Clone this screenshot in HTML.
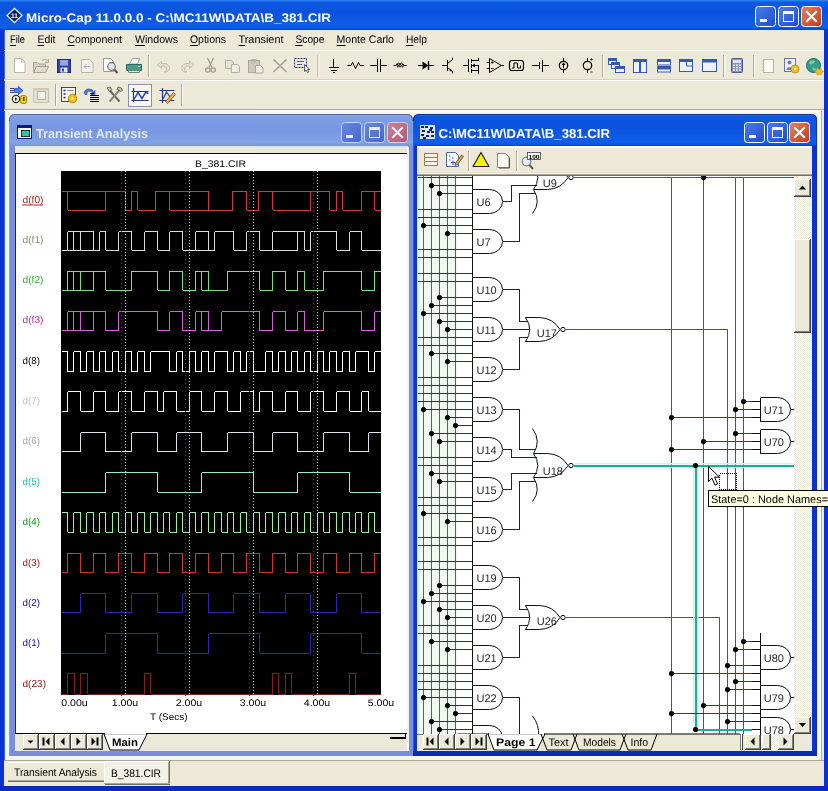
<!DOCTYPE html>
<html><head><meta charset="utf-8"><title>Micro-Cap 11.0.0.0 - C:\MC11W\DATA\B_381.CIR</title>
<style>
html,body{margin:0;padding:0;background:#ece9d8;overflow:hidden}
body{width:828px;height:791px;position:relative;font-family:'Liberation Sans', sans-serif}
svg{position:absolute;left:0;top:0;display:block;will-change:transform;opacity:0.9999}
svg text{font-family:'Liberation Sans', sans-serif;white-space:pre;text-rendering:geometricPrecision}
</style></head><body>
<svg width="828" height="791" viewBox="0 0 828 791">
<defs>
<linearGradient id="gA" x1="0" y1="0" x2="0" y2="1">
<stop offset="0" stop-color="#2f86f5"/><stop offset="0.08" stop-color="#0c58e4"/><stop offset="0.4" stop-color="#0a52dc"/>
<stop offset="0.88" stop-color="#0f5ee8"/><stop offset="0.95" stop-color="#0a55e0"/><stop offset="1" stop-color="#0a3fc8"/>
</linearGradient>
<linearGradient id="gI" x1="0" y1="0" x2="0" y2="1">
<stop offset="0" stop-color="#8fa9ec"/><stop offset="0.1" stop-color="#7f9ee6"/><stop offset="0.5" stop-color="#7896e2"/>
<stop offset="0.9" stop-color="#80a2e6"/><stop offset="1" stop-color="#7b93de"/>
</linearGradient>
<linearGradient id="gBtn" x1="0" y1="0" x2="1" y2="1">
<stop offset="0" stop-color="#4a7cf0"/><stop offset="1" stop-color="#1f4cc8"/>
</linearGradient>
<linearGradient id="gCls" x1="0" y1="0" x2="1" y2="1">
<stop offset="0" stop-color="#e8825c"/><stop offset="1" stop-color="#c2391b"/>
</linearGradient>
<linearGradient id="gBtnI" x1="0" y1="0" x2="1" y2="1">
<stop offset="0" stop-color="#6a88e2"/><stop offset="1" stop-color="#4666ca"/>
</linearGradient>
<linearGradient id="gClsI" x1="0" y1="0" x2="1" y2="1">
<stop offset="0" stop-color="#cc8494"/><stop offset="1" stop-color="#b05a70"/>
</linearGradient>
<clipPath id="cpS"><rect x="417" y="176" width="377" height="558"/></clipPath>
<clipPath id="cpP"><rect x="61" y="171" width="320" height="524"/></clipPath>
</defs>
<rect x="0" y="0" width="828" height="791" fill="#ece9d8" />
<rect x="5" y="111" width="816" height="650" fill="#f6f6f1" />
<rect x="821" y="111" width="1" height="650" fill="#b4b0a0" />
<rect x="0" y="0" width="828" height="30" fill="url(#gA)" />
<rect x="0" y="30" width="4" height="761" fill="#0b33d4" />
<rect x="824" y="30" width="4" height="761" fill="#0b33d4" />
<rect x="0" y="786" width="828" height="5" fill="#0a2cbc" />
<rect x="4" y="30" width="1" height="756" fill="#3a66e8" />
<g><path d="M7,15.5 L14.5,8.5 L22,15.5 L14.5,22.5 Z" fill="#0a1a6a" stroke="#d8f0ff" stroke-width="1.3"/></g>
<text x="14.5" y="18" font-size="6.5" fill="#ffffff" font-weight="bold" text-anchor="middle" >11</text>
<text x="26" y="21.5" font-size="12.5" fill="#fff" font-weight="bold" textLength="305" lengthAdjust="spacingAndGlyphs" text-anchor="start" >Micro-Cap 11.0.0.0 - C:\MC11W\DATA\B_381.CIR</text>
<rect x="755.5" y="6.5" width="20" height="20" rx="3" ry="3" fill="url(#gBtn)" stroke="#fff" stroke-width="1"/>
<rect x="760" y="19" width="7" height="3" fill="#fff" />
<rect x="778.5" y="6.5" width="20" height="20" rx="3" ry="3" fill="url(#gBtn)" stroke="#fff" stroke-width="1"/>
<rect x="783.5" y="11.5" width="10" height="10" fill="none" stroke="#fff" stroke-width="1"/>
<rect x="783" y="11" width="11" height="3" fill="#fff" />
<rect x="801.5" y="6.5" width="20" height="20" rx="3" ry="3" fill="url(#gCls)" stroke="#fff" stroke-width="1"/>
<path d="M807,12 L816,21 M816,12 L807,21" stroke="#fff" stroke-width="2.2" stroke-linecap="square"/>
<text x="10" y="43" font-size="11" fill="#000" textLength="15" lengthAdjust="spacingAndGlyphs" text-anchor="start" >File</text>
<rect x="10" y="45" width="6" height="1" fill="#000" />
<text x="37.5" y="43" font-size="11" fill="#000" textLength="18" lengthAdjust="spacingAndGlyphs" text-anchor="start" >Edit</text>
<rect x="37.5" y="45" width="6.5" height="1" fill="#000" />
<text x="67.5" y="43" font-size="11" fill="#000" textLength="54.5" lengthAdjust="spacingAndGlyphs" text-anchor="start" >Component</text>
<rect x="67.5" y="45" width="7" height="1" fill="#000" />
<text x="135" y="43" font-size="11" fill="#000" textLength="43" lengthAdjust="spacingAndGlyphs" text-anchor="start" >Windows</text>
<rect x="135" y="45" width="10" height="1" fill="#000" />
<text x="190" y="43" font-size="11" fill="#000" textLength="36" lengthAdjust="spacingAndGlyphs" text-anchor="start" >Options</text>
<rect x="190" y="45" width="8" height="1" fill="#000" />
<text x="238.5" y="43" font-size="11" fill="#000" textLength="45" lengthAdjust="spacingAndGlyphs" text-anchor="start" >Transient</text>
<rect x="238.5" y="45" width="6.5" height="1" fill="#000" />
<text x="295.5" y="43" font-size="11" fill="#000" textLength="29" lengthAdjust="spacingAndGlyphs" text-anchor="start" >Scope</text>
<rect x="295.5" y="45" width="7" height="1" fill="#000" />
<text x="336.5" y="43" font-size="11" fill="#000" textLength="57.5" lengthAdjust="spacingAndGlyphs" text-anchor="start" >Monte Carlo</text>
<rect x="336.5" y="45" width="9" height="1" fill="#000" />
<text x="406" y="43" font-size="11" fill="#000" textLength="21" lengthAdjust="spacingAndGlyphs" text-anchor="start" >Help</text>
<rect x="406" y="45" width="7.5" height="1" fill="#000" />
<rect x="4" y="50" width="820" height="1" fill="#fff" />
<rect x="4" y="79" width="820" height="1" fill="#d8d2bd" />
<rect x="4" y="80" width="820" height="1" fill="#fff" />
<rect x="4" y="109" width="820" height="1" fill="#aca899" />
<rect x="4" y="110" width="820" height="1" fill="#fff" />
<rect x="148" y="55" width="1" height="22" fill="#aca899" />
<rect x="149" y="55" width="1" height="22" fill="#fff" />
<rect x="317.5" y="55" width="1" height="22" fill="#aca899" />
<rect x="318.5" y="55" width="1" height="22" fill="#fff" />
<rect x="602" y="55" width="1" height="22" fill="#aca899" />
<rect x="603" y="55" width="1" height="22" fill="#fff" />
<rect x="723" y="55" width="1" height="22" fill="#aca899" />
<rect x="724" y="55" width="1" height="22" fill="#fff" />
<rect x="753" y="55" width="1" height="22" fill="#aca899" />
<rect x="754" y="55" width="1" height="22" fill="#fff" />
<rect x="55" y="84" width="1" height="22" fill="#aca899" />
<rect x="56" y="84" width="1" height="22" fill="#fff" />
<rect x="181" y="84" width="1" height="22" fill="#aca899" />
<rect x="182" y="84" width="1" height="22" fill="#fff" />
<path d="M9,756 V120 Q9,114 15,114 H407 Q413,114 413,120 V756 Z" fill="#7a8fdc"/>
<path d="M9,146 V120 Q9,114 15,114 H407 Q413,114 413,120 V146 Z" fill="url(#gI)"/>
<rect x="9" y="121" width="1" height="635" fill="#8aa0e4" />
<path d="M9.5,121 Q9.5,114.5 15,114.5 H407 Q412.5,114.5 412.5,121" fill="none" stroke="#56649c" stroke-width="1"/>
<rect x="15" y="146" width="393" height="605" fill="#ece9d8" />
<rect x="15" y="146" width="393" height="2" fill="#dfe6f7" />
<rect x="15" y="153" width="392" height="581" fill="#000" />
<rect x="16" y="154" width="392" height="579" fill="#fff" />
<rect x="15" y="153" width="1" height="581" fill="#20286a" />
<rect x="407" y="147" width="2" height="604" fill="#f2f4fa" />
<rect x="17" y="125" width="15" height="14" fill="#fff" />
<rect x="17" y="125" width="15" height="3" fill="#0a1a80" />
<rect x="17.5" y="125.5" width="14" height="13" fill="none" stroke="#0a1a80"/>
<rect x="21" y="130" width="9" height="7" fill="#3cc0a0" />
<rect x="21.5" y="130.5" width="8" height="6" fill="none" stroke="#0a3a40"/>
<text x="36" y="137.5" font-size="13" fill="#dfe7fb" font-weight="bold" textLength="112" lengthAdjust="spacingAndGlyphs" text-anchor="start" >Transient Analysis</text>
<rect x="341.5" y="122.5" width="20" height="20" rx="3" ry="3" fill="url(#gBtnI)" stroke="#c8d4f4" stroke-width="1"/>
<rect x="346" y="135" width="7" height="3" fill="#e8eefc" />
<rect x="364.5" y="122.5" width="20" height="20" rx="3" ry="3" fill="url(#gBtnI)" stroke="#c8d4f4" stroke-width="1"/>
<rect x="369.5" y="127.5" width="10" height="10" fill="none" stroke="#e8eefc" stroke-width="1"/>
<rect x="369" y="127" width="11" height="3" fill="#e8eefc" />
<rect x="387.5" y="122.5" width="20" height="20" rx="3" ry="3" fill="url(#gClsI)" stroke="#c8d4f4" stroke-width="1"/>
<path d="M393,128 L402,137 M402,128 L393,137" stroke="#e8eefc" stroke-width="2.2" stroke-linecap="square"/>
<rect x="16" y="733" width="391" height="1" fill="#000" />
<rect x="16" y="734" width="391" height="17" fill="#ece9d8" />
<rect x="23" y="734" width="16" height="16" fill="#404040" />
<rect x="23" y="734" width="15" height="15" fill="#fff" />
<rect x="24" y="735" width="14" height="14" fill="#808080" />
<rect x="24" y="735" width="13" height="13" fill="#ece9d8" />
<path d="M27.5,740.5 h6 l-3,3 z" fill="#000"/>
<rect x="39" y="734" width="16" height="16" fill="#404040" />
<rect x="39" y="734" width="15" height="15" fill="#fff" />
<rect x="40" y="735" width="14" height="14" fill="#808080" />
<rect x="40" y="735" width="13" height="13" fill="#ece9d8" />
<path d="M49.5,737.5 v8 l-4,-4 z" fill="#000"/>
<rect x="42.5" y="737.5" width="2" height="8" fill="#000" />
<rect x="55" y="734" width="16" height="16" fill="#404040" />
<rect x="55" y="734" width="15" height="15" fill="#fff" />
<rect x="56" y="735" width="14" height="14" fill="#808080" />
<rect x="56" y="735" width="13" height="13" fill="#ece9d8" />
<path d="M64.5,737.5 v8 l-4,-4 z" fill="#000"/>
<rect x="71" y="734" width="16" height="16" fill="#404040" />
<rect x="71" y="734" width="15" height="15" fill="#fff" />
<rect x="72" y="735" width="14" height="14" fill="#808080" />
<rect x="72" y="735" width="13" height="13" fill="#ece9d8" />
<path d="M76.5,737.5 v8 l4,-4 z" fill="#000"/>
<rect x="87" y="734" width="16" height="16" fill="#404040" />
<rect x="87" y="734" width="15" height="15" fill="#fff" />
<rect x="88" y="735" width="14" height="14" fill="#808080" />
<rect x="88" y="735" width="13" height="13" fill="#ece9d8" />
<path d="M91.5,737.5 v8 l4,-4 z" fill="#000"/>
<rect x="96.5" y="737.5" width="2" height="8" fill="#000" />
<path d="M104,734 L110,750 L139,750 L147,734 Z" fill="#fff" stroke="#000" stroke-width="1"/>
<rect x="105" y="733" width="41" height="1.6" fill="#fff" />
<text x="112" y="746" font-size="11" fill="#000" font-weight="bold" textLength="26" lengthAdjust="spacingAndGlyphs" text-anchor="start" >Main</text>
<rect x="390" y="737" width="16" height="2" fill="#000" />
<rect x="405" y="733" width="1" height="5" fill="#000" />
<path d="M413,756 V120 Q413,114 419,114 H811 Q817,114 817,120 V756 Z" fill="#0b33d4"/>
<path d="M413,146 V120 Q413,114 419,114 H811 Q817,114 817,120 V146 Z" fill="url(#gA)"/>
<rect x="413" y="121" width="1" height="635" fill="#2a5ae8" />
<rect x="816" y="121" width="1" height="635" fill="#0a2cb8" />
<path d="M413.5,121 Q413.5,114.5 419,114.5 H811 Q816.5,114.5 816.5,121" fill="none" stroke="#1a2e8c" stroke-width="1"/>
<rect x="417" y="146" width="395" height="605" fill="#ece9d8" />
<rect x="413" y="751" width="404" height="5" fill="#0a2cb4" />
<rect x="417" y="146" width="395" height="2" fill="#fbfaf4" />
<rect x="417" y="174" width="395" height="1" fill="#aca899" />
<rect x="417" y="175" width="395" height="1" fill="#716f64" />
<rect x="417" y="176" width="377" height="558" fill="#fff" />
<rect x="420" y="125" width="15" height="14" fill="#dfe6f8" />
<rect x="421" y="126" width="3" height="2" fill="#10207a" />
<rect x="425" y="126" width="3" height="2" fill="#10207a" />
<rect x="430" y="127" width="3" height="2" fill="#10207a" />
<rect x="422" y="130" width="3" height="2" fill="#10207a" />
<rect x="427" y="131" width="3" height="2" fill="#10207a" />
<rect x="431" y="131" width="3" height="2" fill="#10207a" />
<rect x="421" y="134" width="3" height="2" fill="#10207a" />
<rect x="426" y="135" width="3" height="2" fill="#10207a" />
<rect x="431" y="135" width="3" height="2" fill="#10207a" />
<rect x="423" y="137" width="3" height="2" fill="#10207a" />
<rect x="429" y="129" width="3" height="2" fill="#10207a" />
<text x="438.5" y="137.5" font-size="13" fill="#fff" font-weight="bold" textLength="171.5" lengthAdjust="spacingAndGlyphs" text-anchor="start" >C:\MC11W\DATA\B_381.CIR</text>
<rect x="744.5" y="122.5" width="20" height="20" rx="3" ry="3" fill="url(#gBtn)" stroke="#fff" stroke-width="1"/>
<rect x="749" y="135" width="7" height="3" fill="#fff" />
<rect x="767.5" y="122.5" width="20" height="20" rx="3" ry="3" fill="url(#gBtn)" stroke="#fff" stroke-width="1"/>
<rect x="772.5" y="127.5" width="10" height="10" fill="none" stroke="#fff" stroke-width="1"/>
<rect x="772" y="127" width="11" height="3" fill="#fff" />
<rect x="789.5" y="122.5" width="20" height="20" rx="3" ry="3" fill="url(#gCls)" stroke="#fff" stroke-width="1"/>
<path d="M795,128 L804,137 M804,128 L795,137" stroke="#fff" stroke-width="2.2" stroke-linecap="square"/>
<rect x="794" y="176" width="17" height="558" fill="#f7f5ee" />
<pattern id="dith" width="2" height="2" patternUnits="userSpaceOnUse"><rect width="2" height="2" fill="#fff"/><rect width="1" height="1" fill="#ece9d8"/><rect x="1" y="1" width="1" height="1" fill="#ece9d8"/></pattern>
<rect x="794" y="176" width="17" height="558" fill="url(#dith)" />
<rect x="794" y="179" width="17" height="18" fill="#404040" />
<rect x="794" y="179" width="16" height="17" fill="#fff" />
<rect x="795" y="180" width="15" height="16" fill="#808080" />
<rect x="795" y="180" width="14" height="15" fill="#ece9d8" />
<path d="M799.0,189.5 h7 l-3.5,-4 z" fill="#000"/>
<rect x="794" y="239" width="17" height="94" fill="#404040" />
<rect x="794" y="239" width="16" height="93" fill="#fff" />
<rect x="795" y="240" width="15" height="92" fill="#808080" />
<rect x="795" y="240" width="14" height="91" fill="#ece9d8" />
<rect x="794" y="717" width="17" height="17" fill="#404040" />
<rect x="794" y="717" width="16" height="16" fill="#fff" />
<rect x="795" y="718" width="15" height="15" fill="#808080" />
<rect x="795" y="718" width="14" height="14" fill="#ece9d8" />
<path d="M799.0,723.0 h7 l-3.5,4 z" fill="#000"/>
<rect x="417" y="734" width="395" height="17" fill="#ece9d8" />
<rect x="417" y="733.5" width="323" height="1" fill="#000" />
<rect x="423" y="734" width="16" height="16" fill="#404040" />
<rect x="423" y="734" width="15" height="15" fill="#fff" />
<rect x="424" y="735" width="14" height="14" fill="#808080" />
<rect x="424" y="735" width="13" height="13" fill="#ece9d8" />
<path d="M433.5,737.5 v8 l-4,-4 z" fill="#000"/>
<rect x="426.5" y="737.5" width="2" height="8" fill="#000" />
<rect x="439" y="734" width="16" height="16" fill="#404040" />
<rect x="439" y="734" width="15" height="15" fill="#fff" />
<rect x="440" y="735" width="14" height="14" fill="#808080" />
<rect x="440" y="735" width="13" height="13" fill="#ece9d8" />
<path d="M448.5,737.5 v8 l-4,-4 z" fill="#000"/>
<rect x="455" y="734" width="16" height="16" fill="#404040" />
<rect x="455" y="734" width="15" height="15" fill="#fff" />
<rect x="456" y="735" width="14" height="14" fill="#808080" />
<rect x="456" y="735" width="13" height="13" fill="#ece9d8" />
<path d="M460.5,737.5 v8 l4,-4 z" fill="#000"/>
<rect x="471" y="734" width="16" height="16" fill="#404040" />
<rect x="471" y="734" width="15" height="15" fill="#fff" />
<rect x="472" y="735" width="14" height="14" fill="#808080" />
<rect x="472" y="735" width="13" height="13" fill="#ece9d8" />
<path d="M475.5,737.5 v8 l4,-4 z" fill="#000"/>
<rect x="480.5" y="737.5" width="2" height="8" fill="#000" />
<path d="M488,734 L494,750 L537,750 L545,734 Z" fill="#fff" stroke="#000" stroke-width="1"/>
<rect x="489" y="733" width="55" height="1.6" fill="#fff" />
<text x="496" y="746" font-size="11" fill="#000" font-weight="bold" textLength="39.5" lengthAdjust="spacingAndGlyphs" text-anchor="start" >Page 1</text>
<path d="M541,734 L547,750 H571 L577,734 M573,734 L579,750 H620 L626,734 M622,734 L628,750 H651 L657,734" fill="none" stroke="#000" stroke-width="1"/>
<text x="548.5" y="746" font-size="11" fill="#000" textLength="20" lengthAdjust="spacingAndGlyphs" text-anchor="start" >Text</text>
<text x="583" y="746" font-size="11" fill="#000" textLength="33" lengthAdjust="spacingAndGlyphs" text-anchor="start" >Models</text>
<text x="630.5" y="746" font-size="11" fill="#000" textLength="17.5" lengthAdjust="spacingAndGlyphs" text-anchor="start" >Info</text>
<rect x="740" y="734" width="1" height="16" fill="#808080" />
<rect x="742" y="734" width="1" height="16" fill="#404040" />
<rect x="741" y="734" width="1" height="16" fill="#fff" />
<rect x="745" y="734" width="49" height="16" fill="url(#dith)" />
<rect x="745" y="734" width="16" height="16" fill="#404040" />
<rect x="745" y="734" width="15" height="15" fill="#fff" />
<rect x="746" y="735" width="14" height="14" fill="#808080" />
<rect x="746" y="735" width="13" height="13" fill="#ece9d8" />
<path d="M754.5,737.5 v8 l-4,-4 z" fill="#000"/>
<rect x="778" y="734" width="16" height="16" fill="#404040" />
<rect x="778" y="734" width="15" height="15" fill="#fff" />
<rect x="779" y="735" width="14" height="14" fill="#808080" />
<rect x="779" y="735" width="13" height="13" fill="#ece9d8" />
<path d="M783.5,737.5 v8 l4,-4 z" fill="#000"/>
<rect x="762" y="734" width="9" height="16" fill="#404040" />
<rect x="762" y="734" width="8" height="15" fill="#fff" />
<rect x="763" y="735" width="7" height="14" fill="#808080" />
<rect x="763" y="735" width="6" height="13" fill="#ece9d8" />
<rect x="794" y="734" width="17" height="17" fill="#ece9d8" />
<rect x="4" y="761" width="820" height="25" fill="#ece9d8" />
<rect x="4" y="760" width="820" height="1" fill="#aca899" />
<rect x="8" y="762" width="96" height="1" fill="#fff" />
<rect x="8" y="780" width="96" height="1" fill="#aca899" />
<rect x="8" y="781" width="96" height="1" fill="#716f64" />
<text x="14" y="776" font-size="11" fill="#000" textLength="83" lengthAdjust="spacingAndGlyphs" text-anchor="start" >Transient Analysis</text>
<rect x="104" y="761" width="66" height="23" fill="#f4f2e8" />
<rect x="104" y="761" width="66" height="1" fill="#fff" />
<rect x="104" y="761" width="1" height="23" fill="#fff" />
<rect x="169" y="761" width="1" height="23" fill="#716f64" />
<rect x="168" y="762" width="1" height="22" fill="#aca899" />
<rect x="104" y="783" width="66" height="1" fill="#aca899" />
<rect x="105" y="784" width="65" height="1" fill="#716f64" />
<text x="111" y="777" font-size="11" fill="#000" textLength="50" lengthAdjust="spacingAndGlyphs" text-anchor="start" >B_381.CIR</text>
<rect x="61" y="171" width="320" height="524" fill="#000" />
<text x="195" y="166.5" font-size="9.5" fill="#000" textLength="51" lengthAdjust="spacingAndGlyphs" text-anchor="start" >B_381.CIR</text>
<g clip-path="url(#cpP)" fill="none" stroke-width="1" shape-rendering="crispEdges">
<path d="M61.5,191H67.5M67.5,191V210M67.5,191H105.5M67.5,210H105.5M105.5,191V210M105.5,191H125.5M125.5,191V210M125.5,210H131.5M131.5,191V210M131.5,191H137.5M137.5,191V210M137.5,210H155.5M155.5,191V210M155.5,191H169.5M169.5,191V210M169.5,191H208.5M169.5,210H208.5M208.5,191V210M208.5,210H232.5M232.5,191V210M232.5,191H246.5M246.5,191V210M246.5,210H258.5M258.5,191V210M258.5,191H272.5M272.5,191V210M272.5,191H310.5M272.5,210H310.5M310.5,191V210M310.5,191H329.5M329.5,191V210M329.5,210H336.5M336.5,191V210M336.5,191H342.5M342.5,191V210M342.5,210H361.5M361.5,191V210M361.5,191H374.5M374.5,191V210M374.5,191H381.5M374.5,210H381.5" stroke="#d03c3c"/>
<path d="M61.5,250H67.5M67.5,231.5V250M67.5,231.5H73.5M67.5,250H73.5M73.5,231.5V250M73.5,231.5H80.5M73.5,250H80.5M80.5,231.5V250M80.5,231.5H93.5M80.5,250H93.5M93.5,231.5V250M93.5,250H99.5M99.5,231.5V250M99.5,231.5H105.5M105.5,231.5V250M105.5,250H118.5M118.5,231.5V250M118.5,231.5H131.5M131.5,231.5V250M131.5,250H144.5M144.5,231.5V250M144.5,231.5H157.5M157.5,231.5V250M157.5,250H169.5M169.5,231.5V250M169.5,231.5H182.5M182.5,231.5V250M182.5,250H195.5M195.5,231.5V250M195.5,231.5H208.5M195.5,250H208.5M208.5,231.5V250M208.5,250H214.5M214.5,231.5V250M214.5,231.5H233.5M233.5,231.5V250M233.5,250H246.5M246.5,231.5V250M246.5,231.5H259.5M259.5,231.5V250M259.5,250H272.5M272.5,231.5V250M272.5,231.5H297.5M272.5,250H297.5M297.5,231.5V250M297.5,231.5H304.5M304.5,231.5V250M304.5,250H310.5M310.5,231.5V250M310.5,231.5H336.5M336.5,231.5V250M336.5,250H349.5M349.5,231.5V250M349.5,231.5H361.5M361.5,231.5V250M361.5,250H381.5" stroke="#dcdcd0"/>
<path d="M61.5,290H67.5M67.5,271V290M67.5,271H73.5M67.5,290H73.5M73.5,271V290M73.5,271H80.5M73.5,290H80.5M80.5,271V290M80.5,271H93.5M80.5,290H93.5M93.5,271V290M93.5,271H105.5M105.5,271V290M105.5,290H131.5M131.5,271V290M131.5,271H157.5M157.5,271V290M157.5,290H169.5M169.5,271V290M169.5,271H182.5M182.5,271V290M182.5,290H195.5M195.5,271V290M195.5,271H201.5M201.5,271V290M201.5,271H208.5M201.5,290H208.5M208.5,271V290M208.5,290H227.5M227.5,271V290M227.5,271H259.5M259.5,271V290M259.5,290H272.5M272.5,271V290M272.5,271H285.5M285.5,271V290M285.5,290H297.5M297.5,271V290M297.5,271H304.5M304.5,271V290M304.5,290H323.5M323.5,271V290M323.5,271H361.5M361.5,271V290M361.5,290H374.5M374.5,271V290M374.5,271H381.5" stroke="#7fe07f"/>
<path d="M61.5,330.5H67.5M67.5,311.5V330.5M67.5,311.5H73.5M67.5,330.5H73.5M73.5,311.5V330.5M73.5,311.5H80.5M73.5,330.5H80.5M80.5,311.5V330.5M80.5,311.5H93.5M80.5,330.5H93.5M93.5,311.5V330.5M93.5,311.5H105.5M105.5,311.5V330.5M105.5,330.5H118.5M118.5,311.5V330.5M118.5,311.5H157.5M157.5,311.5V330.5M157.5,330.5H169.5M169.5,311.5V330.5M169.5,311.5H182.5M182.5,311.5V330.5M182.5,330.5H195.5M195.5,311.5V330.5M195.5,311.5H201.5M201.5,311.5V330.5M201.5,311.5H208.5M201.5,330.5H208.5M208.5,311.5V330.5M208.5,330.5H221.5M221.5,311.5V330.5M221.5,311.5H259.5M259.5,311.5V330.5M259.5,330.5H272.5M272.5,311.5V330.5M272.5,311.5H285.5M285.5,311.5V330.5M285.5,330.5H297.5M297.5,311.5V330.5M297.5,311.5H304.5M304.5,311.5V330.5M304.5,330.5H323.5M323.5,311.5V330.5M323.5,311.5H361.5M361.5,311.5V330.5M361.5,330.5H374.5M374.5,311.5V330.5M374.5,311.5H381.5" stroke="#d860d8"/>
<path d="M61.5,351.5H67.5M67.5,351.5V371.5M67.5,371.5H73.5M73.5,351.5V371.5M73.5,351.5H80.5M80.5,351.5V371.5M80.5,371.5H86.5M86.5,351.5V371.5M86.5,351.5H93.5M93.5,351.5V371.5M93.5,371.5H99.5M99.5,351.5V371.5M99.5,351.5H105.5M105.5,351.5V371.5M105.5,371.5H112.5M112.5,351.5V371.5M112.5,351.5H118.5M118.5,351.5V371.5M118.5,371.5H125.5M125.5,351.5V371.5M125.5,351.5H131.5M131.5,351.5V371.5M131.5,371.5H137.5M137.5,351.5V371.5M137.5,351.5H144.5M144.5,351.5V371.5M144.5,371.5H150.5M150.5,351.5V371.5M150.5,351.5H169.5M169.5,351.5V371.5M169.5,371.5H176.5M176.5,351.5V371.5M176.5,351.5H182.5M182.5,351.5V371.5M182.5,371.5H189.5M189.5,351.5V371.5M189.5,351.5H195.5M195.5,351.5V371.5M195.5,371.5H201.5M201.5,351.5V371.5M201.5,351.5H208.5M208.5,351.5V371.5M208.5,371.5H214.5M214.5,351.5V371.5M214.5,351.5H227.5M227.5,351.5V371.5M227.5,371.5H233.5M233.5,351.5V371.5M233.5,351.5H240.5M240.5,351.5V371.5M240.5,371.5H246.5M246.5,351.5V371.5M246.5,351.5H253.5M253.5,351.5V371.5M253.5,371.5H265.5M265.5,351.5V371.5M265.5,351.5H272.5M272.5,351.5V371.5M272.5,371.5H278.5M278.5,351.5V371.5M278.5,351.5H285.5M285.5,351.5V371.5M285.5,371.5H291.5M291.5,351.5V371.5M291.5,351.5H297.5M297.5,351.5V371.5M297.5,371.5H304.5M304.5,351.5V371.5M304.5,351.5H310.5M310.5,351.5V371.5M310.5,371.5H317.5M317.5,351.5V371.5M317.5,351.5H323.5M323.5,351.5V371.5M323.5,371.5H329.5M329.5,351.5V371.5M329.5,351.5H336.5M336.5,351.5V371.5M336.5,371.5H342.5M342.5,351.5V371.5M342.5,351.5H349.5M349.5,351.5V371.5M349.5,371.5H355.5M355.5,351.5V371.5M355.5,351.5H368.5M368.5,351.5V371.5M368.5,371.5H374.5M374.5,351.5V371.5M374.5,351.5H381.5" stroke="#ffffff"/>
<path d="M61.5,411H67.5M67.5,391.5V411M67.5,391.5H80.5M80.5,391.5V411M80.5,411H93.5M93.5,391.5V411M93.5,391.5H105.5M105.5,391.5V411M105.5,411H118.5M118.5,391.5V411M118.5,391.5H131.5M131.5,391.5V411M131.5,411H144.5M144.5,391.5V411M144.5,391.5H157.5M157.5,391.5V411M157.5,411H163.5M163.5,391.5V411M163.5,391.5H176.5M176.5,391.5V411M176.5,411H189.5M189.5,391.5V411M189.5,391.5H201.5M201.5,391.5V411M201.5,411H214.5M214.5,391.5V411M214.5,391.5H227.5M227.5,391.5V411M227.5,411H240.5M240.5,391.5V411M240.5,391.5H253.5M253.5,391.5V411M253.5,411H259.5M259.5,391.5V411M259.5,391.5H272.5M272.5,391.5V411M272.5,411H285.5M285.5,391.5V411M285.5,391.5H297.5M297.5,391.5V411M297.5,411H310.5M310.5,391.5V411M310.5,391.5H323.5M323.5,391.5V411M323.5,411H336.5M336.5,391.5V411M336.5,391.5H349.5M349.5,391.5V411M349.5,411H361.5M361.5,391.5V411M361.5,391.5H368.5M368.5,391.5V411M368.5,411H381.5" stroke="#f4f4f4"/>
<path d="M61.5,451.5H80.5M80.5,432.5V451.5M80.5,432.5H105.5M105.5,432.5V451.5M105.5,451.5H131.5M131.5,432.5V451.5M131.5,432.5H157.5M157.5,432.5V451.5M157.5,451.5H176.5M176.5,432.5V451.5M176.5,432.5H201.5M201.5,432.5V451.5M201.5,451.5H227.5M227.5,432.5V451.5M227.5,432.5H253.5M253.5,432.5V451.5M253.5,451.5H272.5M272.5,432.5V451.5M272.5,432.5H297.5M297.5,432.5V451.5M297.5,451.5H323.5M323.5,432.5V451.5M323.5,432.5H349.5M349.5,432.5V451.5M349.5,451.5H368.5M368.5,432.5V451.5M368.5,432.5H381.5" stroke="#e0e0ec"/>
<path d="M61.5,492H105.5M105.5,472.5V492M105.5,472.5H157.5M157.5,472.5V492M157.5,492H201.5M201.5,472.5V492M201.5,472.5H253.5M253.5,472.5V492M253.5,492H297.5M297.5,472.5V492M297.5,472.5H349.5M349.5,472.5V492M349.5,492H381.5" stroke="#a0e8dc"/>
<path d="M61.5,512.5H67.5M67.5,512.5V532M67.5,532H73.5M73.5,512.5V532M73.5,512.5H80.5M80.5,512.5V532M80.5,532H86.5M86.5,512.5V532M86.5,512.5H93.5M93.5,512.5V532M93.5,532H99.5M99.5,512.5V532M99.5,512.5H105.5M105.5,512.5V532M105.5,532H112.5M112.5,512.5V532M112.5,512.5H118.5M118.5,512.5V532M118.5,532H125.5M125.5,512.5V532M125.5,512.5H131.5M131.5,512.5V532M131.5,532H137.5M137.5,512.5V532M137.5,512.5H144.5M144.5,512.5V532M144.5,532H150.5M150.5,512.5V532M150.5,512.5H157.5M157.5,512.5V532M157.5,532H163.5M163.5,512.5V532M163.5,512.5H169.5M169.5,512.5V532M169.5,532H176.5M176.5,512.5V532M176.5,512.5H182.5M182.5,512.5V532M182.5,532H189.5M189.5,512.5V532M189.5,512.5H195.5M195.5,512.5V532M195.5,532H201.5M201.5,512.5V532M201.5,512.5H208.5M208.5,512.5V532M208.5,532H214.5M214.5,512.5V532M214.5,512.5H221.5M221.5,512.5V532M221.5,532H227.5M227.5,512.5V532M227.5,512.5H233.5M233.5,512.5V532M233.5,532H240.5M240.5,512.5V532M240.5,512.5H246.5M246.5,512.5V532M246.5,532H253.5M253.5,512.5V532M253.5,512.5H259.5M259.5,512.5V532M259.5,532H265.5M265.5,512.5V532M265.5,512.5H272.5M272.5,512.5V532M272.5,532H278.5M278.5,512.5V532M278.5,512.5H285.5M285.5,512.5V532M285.5,532H291.5M291.5,512.5V532M291.5,512.5H297.5M297.5,512.5V532M297.5,532H304.5M304.5,512.5V532M304.5,512.5H310.5M310.5,512.5V532M310.5,532H317.5M317.5,512.5V532M317.5,512.5H323.5M323.5,512.5V532M323.5,532H329.5M329.5,512.5V532M329.5,512.5H336.5M336.5,512.5V532M336.5,532H342.5M342.5,512.5V532M342.5,512.5H349.5M349.5,512.5V532M349.5,532H355.5M355.5,512.5V532M355.5,512.5H361.5M361.5,512.5V532M361.5,532H368.5M368.5,512.5V532M368.5,512.5H374.5M374.5,512.5V532M374.5,532H381.5" stroke="#a0f0a0"/>
<path d="M61.5,572.5H67.5M67.5,553V572.5M67.5,553H80.5M80.5,553V572.5M80.5,572.5H93.5M93.5,553V572.5M93.5,553H105.5M105.5,553V572.5M105.5,572.5H118.5M118.5,553V572.5M118.5,553H131.5M131.5,553V572.5M131.5,572.5H144.5M144.5,553V572.5M144.5,553H157.5M157.5,553V572.5M157.5,572.5H169.5M169.5,553V572.5M169.5,553H182.5M182.5,553V572.5M182.5,572.5H195.5M195.5,553V572.5M195.5,553H208.5M208.5,553V572.5M208.5,572.5H221.5M221.5,553V572.5M221.5,553H233.5M233.5,553V572.5M233.5,572.5H246.5M246.5,553V572.5M246.5,553H259.5M259.5,553V572.5M259.5,572.5H272.5M272.5,553V572.5M272.5,553H285.5M285.5,553V572.5M285.5,572.5H297.5M297.5,553V572.5M297.5,553H310.5M310.5,553V572.5M310.5,572.5H323.5M323.5,553V572.5M323.5,553H336.5M336.5,553V572.5M336.5,572.5H349.5M349.5,553V572.5M349.5,553H361.5M361.5,553V572.5M361.5,572.5H374.5M374.5,553V572.5M374.5,553H381.5" stroke="#c83838"/>
<path d="M61.5,612.5H80.5M80.5,593.5V612.5M80.5,593.5H105.5M105.5,593.5V612.5M105.5,612.5H131.5M131.5,593.5V612.5M131.5,593.5H157.5M157.5,593.5V612.5M157.5,612.5H182.5M182.5,593.5V612.5M182.5,593.5H208.5M208.5,593.5V612.5M208.5,612.5H233.5M233.5,593.5V612.5M233.5,593.5H259.5M259.5,593.5V612.5M259.5,612.5H285.5M285.5,593.5V612.5M285.5,593.5H310.5M310.5,593.5V612.5M310.5,612.5H336.5M336.5,593.5V612.5M336.5,593.5H361.5M361.5,593.5V612.5M361.5,612.5H381.5" stroke="#2828b0"/>
<path d="M61.5,653H105.5M105.5,633.5V653M105.5,633.5H157.5M157.5,633.5V653M157.5,653H208.5M208.5,633.5V653M208.5,633.5H259.5M259.5,633.5V653M259.5,653H310.5M310.5,633.5V653M310.5,633.5H361.5M361.5,633.5V653M361.5,653H381.5" stroke="#2828b0"/>
<path d="M61.5,694H67.5M67.5,673V694M67.5,673H74.5M74.5,673V694M74.5,694H80.5M80.5,673V694M80.5,673H87.5M87.5,673V694M87.5,694H144.5M144.5,673V694M144.5,673H150.5M150.5,673V694M150.5,694H272.5M272.5,673V694M272.5,673H278.5M278.5,673V694M278.5,694H285.5M285.5,673V694M285.5,673H291.5M291.5,673V694M291.5,694H349.5M349.5,673V694M349.5,673H355.5M355.5,673V694M355.5,694H381.5" stroke="#802020"/>
</g>
<line x1="125.5" y1="171" x2="125.5" y2="696" stroke="#d0d0d0" stroke-width="1" stroke-dasharray="1,2" shape-rendering="crispEdges"/>
<line x1="121.0" y1="171" x2="121.0" y2="696" stroke="#484848" stroke-width="1" stroke-dasharray="1,3" shape-rendering="crispEdges"/>
<line x1="189.5" y1="171" x2="189.5" y2="696" stroke="#d0d0d0" stroke-width="1" stroke-dasharray="1,2" shape-rendering="crispEdges"/>
<line x1="185.0" y1="171" x2="185.0" y2="696" stroke="#484848" stroke-width="1" stroke-dasharray="1,3" shape-rendering="crispEdges"/>
<line x1="253.5" y1="171" x2="253.5" y2="696" stroke="#d0d0d0" stroke-width="1" stroke-dasharray="1,2" shape-rendering="crispEdges"/>
<line x1="249.0" y1="171" x2="249.0" y2="696" stroke="#484848" stroke-width="1" stroke-dasharray="1,3" shape-rendering="crispEdges"/>
<line x1="317.5" y1="171" x2="317.5" y2="696" stroke="#d0d0d0" stroke-width="1" stroke-dasharray="1,2" shape-rendering="crispEdges"/>
<line x1="313.0" y1="171" x2="313.0" y2="696" stroke="#484848" stroke-width="1" stroke-dasharray="1,3" shape-rendering="crispEdges"/>
<text x="22.5" y="202.5" font-size="10" fill="#b02020" textLength="21" lengthAdjust="spacingAndGlyphs" text-anchor="start" >d(f0)</text>
<rect x="22" y="204.5" width="21" height="1" fill="#b02020" />
<text x="22.5" y="243.0" font-size="10" fill="#8c8c6c" textLength="21" lengthAdjust="spacingAndGlyphs" text-anchor="start" >d(f1)</text>
<text x="22.5" y="283.0" font-size="10" fill="#30b030" textLength="21" lengthAdjust="spacingAndGlyphs" text-anchor="start" >d(f2)</text>
<text x="22.5" y="323.0" font-size="10" fill="#b030b0" textLength="21" lengthAdjust="spacingAndGlyphs" text-anchor="start" >d(f3)</text>
<text x="22.5" y="363.5" font-size="10" fill="#000000" textLength="17.5" lengthAdjust="spacingAndGlyphs" text-anchor="start" >d(8)</text>
<text x="22.5" y="404.0" font-size="10" fill="#c4c4c4" textLength="17.5" lengthAdjust="spacingAndGlyphs" text-anchor="start" >d(7)</text>
<text x="22.5" y="444.0" font-size="10" fill="#a8a8a8" textLength="17.5" lengthAdjust="spacingAndGlyphs" text-anchor="start" >d(6)</text>
<text x="22.5" y="485.0" font-size="10" fill="#20b8b8" textLength="17.5" lengthAdjust="spacingAndGlyphs" text-anchor="start" >d(5)</text>
<text x="22.5" y="525.0" font-size="10" fill="#10a010" textLength="17.5" lengthAdjust="spacingAndGlyphs" text-anchor="start" >d(4)</text>
<text x="22.5" y="565.5" font-size="10" fill="#a01818" textLength="17.5" lengthAdjust="spacingAndGlyphs" text-anchor="start" >d(3)</text>
<text x="22.5" y="606.0" font-size="10" fill="#101080" textLength="17.5" lengthAdjust="spacingAndGlyphs" text-anchor="start" >d(2)</text>
<text x="22.5" y="646.0" font-size="10" fill="#101080" textLength="17.5" lengthAdjust="spacingAndGlyphs" text-anchor="start" >d(1)</text>
<text x="22.5" y="687.0" font-size="10" fill="#901010" textLength="23.5" lengthAdjust="spacingAndGlyphs" text-anchor="start" >d(23)</text>
<text x="74.5" y="706" font-size="9.5" fill="#000" textLength="26.5" lengthAdjust="spacingAndGlyphs" text-anchor="middle" >0.00u</text>
<text x="125" y="706" font-size="9.5" fill="#000" textLength="26.5" lengthAdjust="spacingAndGlyphs" text-anchor="middle" >1.00u</text>
<text x="189" y="706" font-size="9.5" fill="#000" textLength="26.5" lengthAdjust="spacingAndGlyphs" text-anchor="middle" >2.00u</text>
<text x="253" y="706" font-size="9.5" fill="#000" textLength="26.5" lengthAdjust="spacingAndGlyphs" text-anchor="middle" >3.00u</text>
<text x="317" y="706" font-size="9.5" fill="#000" textLength="26.5" lengthAdjust="spacingAndGlyphs" text-anchor="middle" >4.00u</text>
<text x="381" y="706" font-size="9.5" fill="#000" textLength="26.5" lengthAdjust="spacingAndGlyphs" text-anchor="middle" >5.00u</text>
<text x="150" y="719.5" font-size="9.5" fill="#000" textLength="37.5" lengthAdjust="spacingAndGlyphs" text-anchor="start" >T (Secs)</text>
<g clip-path="url(#cpS)" fill="none" shape-rendering="crispEdges">
<rect x="417" y="176" width="2" height="558" fill="#dff0f6" />
<rect x="419" y="176" width="39" height="558" fill="#f3faf2" />
<line x1="423.5" y1="176" x2="423.5" y2="734" stroke="#3a7a3a" stroke-width="1" />
<line x1="431.5" y1="176" x2="431.5" y2="734" stroke="#3a7a3a" stroke-width="1" />
<line x1="439.5" y1="176" x2="439.5" y2="734" stroke="#3a7a3a" stroke-width="1" />
<line x1="447.5" y1="176" x2="447.5" y2="734" stroke="#3a7a3a" stroke-width="1" />
<line x1="455.5" y1="176" x2="455.5" y2="734" stroke="#3a7a3a" stroke-width="1" />
<line x1="418" y1="177.5" x2="472.5" y2="177.5" stroke="#243a24" stroke-width="1" />
<line x1="431.5" y1="185.5" x2="472.5" y2="185.5" stroke="#243a24" stroke-width="1" />
<line x1="439.5" y1="193.5" x2="472.5" y2="193.5" stroke="#243a24" stroke-width="1" />
<line x1="418" y1="209.5" x2="472.5" y2="209.5" stroke="#243a24" stroke-width="1" />
<line x1="418" y1="217.5" x2="472.5" y2="217.5" stroke="#243a24" stroke-width="1" />
<line x1="423.5" y1="225.5" x2="472.5" y2="225.5" stroke="#243a24" stroke-width="1" />
<line x1="447.5" y1="233.5" x2="472.5" y2="233.5" stroke="#243a24" stroke-width="1" />
<line x1="418" y1="249.5" x2="472.5" y2="249.5" stroke="#243a24" stroke-width="1" />
<line x1="418" y1="257.5" x2="472.5" y2="257.5" stroke="#243a24" stroke-width="1" />
<line x1="418" y1="273.5" x2="472.5" y2="273.5" stroke="#243a24" stroke-width="1" />
<line x1="418" y1="281.5" x2="472.5" y2="281.5" stroke="#243a24" stroke-width="1" />
<line x1="439.5" y1="297.5" x2="472.5" y2="297.5" stroke="#243a24" stroke-width="1" />
<line x1="431.5" y1="305.5" x2="472.5" y2="305.5" stroke="#243a24" stroke-width="1" />
<line x1="423.5" y1="313.5" x2="472.5" y2="313.5" stroke="#243a24" stroke-width="1" />
<line x1="439.5" y1="321.5" x2="472.5" y2="321.5" stroke="#243a24" stroke-width="1" />
<line x1="447.5" y1="329.5" x2="472.5" y2="329.5" stroke="#243a24" stroke-width="1" />
<line x1="418" y1="337.5" x2="472.5" y2="337.5" stroke="#243a24" stroke-width="1" />
<line x1="418" y1="345.5" x2="472.5" y2="345.5" stroke="#243a24" stroke-width="1" />
<line x1="431.5" y1="353.5" x2="472.5" y2="353.5" stroke="#243a24" stroke-width="1" />
<line x1="447.5" y1="361.5" x2="472.5" y2="361.5" stroke="#243a24" stroke-width="1" />
<line x1="418" y1="377.5" x2="472.5" y2="377.5" stroke="#243a24" stroke-width="1" />
<line x1="418" y1="385.5" x2="472.5" y2="385.5" stroke="#243a24" stroke-width="1" />
<line x1="418" y1="393.5" x2="472.5" y2="393.5" stroke="#243a24" stroke-width="1" />
<line x1="418" y1="401.5" x2="472.5" y2="401.5" stroke="#243a24" stroke-width="1" />
<line x1="423.5" y1="409.5" x2="472.5" y2="409.5" stroke="#243a24" stroke-width="1" />
<line x1="447.5" y1="417.5" x2="472.5" y2="417.5" stroke="#243a24" stroke-width="1" />
<line x1="455.5" y1="425.5" x2="472.5" y2="425.5" stroke="#243a24" stroke-width="1" />
<line x1="431.5" y1="433.5" x2="472.5" y2="433.5" stroke="#243a24" stroke-width="1" />
<line x1="439.5" y1="441.5" x2="472.5" y2="441.5" stroke="#243a24" stroke-width="1" />
<line x1="418" y1="457.5" x2="472.5" y2="457.5" stroke="#243a24" stroke-width="1" />
<line x1="418" y1="465.5" x2="472.5" y2="465.5" stroke="#243a24" stroke-width="1" />
<line x1="431.5" y1="473.5" x2="472.5" y2="473.5" stroke="#243a24" stroke-width="1" />
<line x1="439.5" y1="481.5" x2="472.5" y2="481.5" stroke="#243a24" stroke-width="1" />
<line x1="418" y1="497.5" x2="472.5" y2="497.5" stroke="#243a24" stroke-width="1" />
<line x1="418" y1="505.5" x2="472.5" y2="505.5" stroke="#243a24" stroke-width="1" />
<line x1="423.5" y1="513.5" x2="472.5" y2="513.5" stroke="#243a24" stroke-width="1" />
<line x1="447.5" y1="521.5" x2="472.5" y2="521.5" stroke="#243a24" stroke-width="1" />
<line x1="418" y1="537.5" x2="472.5" y2="537.5" stroke="#243a24" stroke-width="1" />
<line x1="418" y1="545.5" x2="472.5" y2="545.5" stroke="#243a24" stroke-width="1" />
<line x1="418" y1="561.5" x2="472.5" y2="561.5" stroke="#243a24" stroke-width="1" />
<line x1="418" y1="569.5" x2="472.5" y2="569.5" stroke="#243a24" stroke-width="1" />
<line x1="439.5" y1="585.5" x2="472.5" y2="585.5" stroke="#243a24" stroke-width="1" />
<line x1="431.5" y1="593.5" x2="472.5" y2="593.5" stroke="#243a24" stroke-width="1" />
<line x1="423.5" y1="601.5" x2="472.5" y2="601.5" stroke="#243a24" stroke-width="1" />
<line x1="439.5" y1="609.5" x2="472.5" y2="609.5" stroke="#243a24" stroke-width="1" />
<line x1="447.5" y1="617.5" x2="472.5" y2="617.5" stroke="#243a24" stroke-width="1" />
<line x1="418" y1="625.5" x2="472.5" y2="625.5" stroke="#243a24" stroke-width="1" />
<line x1="418" y1="633.5" x2="472.5" y2="633.5" stroke="#243a24" stroke-width="1" />
<line x1="431.5" y1="641.5" x2="472.5" y2="641.5" stroke="#243a24" stroke-width="1" />
<line x1="447.5" y1="649.5" x2="472.5" y2="649.5" stroke="#243a24" stroke-width="1" />
<line x1="418" y1="665.5" x2="472.5" y2="665.5" stroke="#243a24" stroke-width="1" />
<line x1="418" y1="673.5" x2="472.5" y2="673.5" stroke="#243a24" stroke-width="1" />
<line x1="418" y1="681.5" x2="472.5" y2="681.5" stroke="#243a24" stroke-width="1" />
<line x1="418" y1="689.5" x2="472.5" y2="689.5" stroke="#243a24" stroke-width="1" />
<line x1="423.5" y1="697.5" x2="472.5" y2="697.5" stroke="#243a24" stroke-width="1" />
<line x1="447.5" y1="705.5" x2="472.5" y2="705.5" stroke="#243a24" stroke-width="1" />
<line x1="455.5" y1="713.5" x2="472.5" y2="713.5" stroke="#243a24" stroke-width="1" />
<line x1="431.5" y1="721.5" x2="472.5" y2="721.5" stroke="#243a24" stroke-width="1" />
<line x1="439.5" y1="729.5" x2="472.5" y2="729.5" stroke="#243a24" stroke-width="1" />
<line x1="472.5" y1="176" x2="472.5" y2="734" stroke="#101010" stroke-width="1" />
</g>
<g clip-path="url(#cpS)" fill="none">
<path d="M472.5,189.5 H489.5 A13,12 0 0 1 489.5,213.5 H472.5" stroke="#101010" stroke-width="1" fill="none"/>
<line x1="472.5" y1="189.5" x2="472.5" y2="213.5" stroke="#101010" shape-rendering="crispEdges"/>
<text x="476.5" y="205.5" font-size="11" fill="#282828" text-anchor="start" >U6</text>
<path d="M472.5,229.5 H489.5 A13,12 0 0 1 489.5,253.5 H472.5" stroke="#101010" stroke-width="1" fill="none"/>
<line x1="472.5" y1="229.5" x2="472.5" y2="253.5" stroke="#101010" shape-rendering="crispEdges"/>
<text x="476.5" y="245.5" font-size="11" fill="#282828" text-anchor="start" >U7</text>
<path d="M472.5,277.5 H489.5 A13,12 0 0 1 489.5,301.5 H472.5" stroke="#101010" stroke-width="1" fill="none"/>
<line x1="472.5" y1="277.5" x2="472.5" y2="301.5" stroke="#101010" shape-rendering="crispEdges"/>
<text x="476.5" y="293.5" font-size="11" fill="#282828" text-anchor="start" >U10</text>
<path d="M472.5,317.5 H489.5 A13,12 0 0 1 489.5,341.5 H472.5" stroke="#101010" stroke-width="1" fill="none"/>
<line x1="472.5" y1="317.5" x2="472.5" y2="341.5" stroke="#101010" shape-rendering="crispEdges"/>
<text x="476.5" y="333.5" font-size="11" fill="#282828" text-anchor="start" >U11</text>
<path d="M472.5,357.5 H489.5 A13,12 0 0 1 489.5,381.5 H472.5" stroke="#101010" stroke-width="1" fill="none"/>
<line x1="472.5" y1="357.5" x2="472.5" y2="381.5" stroke="#101010" shape-rendering="crispEdges"/>
<text x="476.5" y="373.5" font-size="11" fill="#282828" text-anchor="start" >U12</text>
<path d="M472.5,397.5 H489.5 A13,12 0 0 1 489.5,421.5 H472.5" stroke="#101010" stroke-width="1" fill="none"/>
<line x1="472.5" y1="397.5" x2="472.5" y2="421.5" stroke="#101010" shape-rendering="crispEdges"/>
<text x="476.5" y="413.5" font-size="11" fill="#282828" text-anchor="start" >U13</text>
<path d="M472.5,437.5 H489.5 A13,12 0 0 1 489.5,461.5 H472.5" stroke="#101010" stroke-width="1" fill="none"/>
<line x1="472.5" y1="437.5" x2="472.5" y2="461.5" stroke="#101010" shape-rendering="crispEdges"/>
<text x="476.5" y="453.5" font-size="11" fill="#282828" text-anchor="start" >U14</text>
<path d="M472.5,477.5 H489.5 A13,12 0 0 1 489.5,501.5 H472.5" stroke="#101010" stroke-width="1" fill="none"/>
<line x1="472.5" y1="477.5" x2="472.5" y2="501.5" stroke="#101010" shape-rendering="crispEdges"/>
<text x="476.5" y="493.5" font-size="11" fill="#282828" text-anchor="start" >U15</text>
<path d="M472.5,517.5 H489.5 A13,12 0 0 1 489.5,541.5 H472.5" stroke="#101010" stroke-width="1" fill="none"/>
<line x1="472.5" y1="517.5" x2="472.5" y2="541.5" stroke="#101010" shape-rendering="crispEdges"/>
<text x="476.5" y="533.5" font-size="11" fill="#282828" text-anchor="start" >U16</text>
<path d="M472.5,565.5 H489.5 A13,12 0 0 1 489.5,589.5 H472.5" stroke="#101010" stroke-width="1" fill="none"/>
<line x1="472.5" y1="565.5" x2="472.5" y2="589.5" stroke="#101010" shape-rendering="crispEdges"/>
<text x="476.5" y="581.5" font-size="11" fill="#282828" text-anchor="start" >U19</text>
<path d="M472.5,605.5 H489.5 A13,12 0 0 1 489.5,629.5 H472.5" stroke="#101010" stroke-width="1" fill="none"/>
<line x1="472.5" y1="605.5" x2="472.5" y2="629.5" stroke="#101010" shape-rendering="crispEdges"/>
<text x="476.5" y="621.5" font-size="11" fill="#282828" text-anchor="start" >U20</text>
<path d="M472.5,645.5 H489.5 A13,12 0 0 1 489.5,669.5 H472.5" stroke="#101010" stroke-width="1" fill="none"/>
<line x1="472.5" y1="645.5" x2="472.5" y2="669.5" stroke="#101010" shape-rendering="crispEdges"/>
<text x="476.5" y="661.5" font-size="11" fill="#282828" text-anchor="start" >U21</text>
<path d="M472.5,685.5 H489.5 A13,12 0 0 1 489.5,709.5 H472.5" stroke="#101010" stroke-width="1" fill="none"/>
<line x1="472.5" y1="685.5" x2="472.5" y2="709.5" stroke="#101010" shape-rendering="crispEdges"/>
<text x="476.5" y="701.5" font-size="11" fill="#282828" text-anchor="start" >U22</text>
<path d="M472.5,725.5 H489.5 A13,12 0 0 1 489.5,749.5 H472.5" stroke="#101010" stroke-width="1" fill="none"/>
<line x1="472.5" y1="725.5" x2="472.5" y2="749.5" stroke="#101010" shape-rendering="crispEdges"/>
<text x="476.5" y="741.5" font-size="11" fill="#282828" text-anchor="start" ></text>
<polyline points="503,201.5 511.5,201.5 511.5,185.5 537,185.5" stroke="#1c2c1c" stroke-width="1" fill="none" shape-rendering="crispEdges"/>
<polyline points="503,241.5 519.5,241.5 519.5,193.5 535.5,193.5" stroke="#1c2c1c" stroke-width="1" fill="none" shape-rendering="crispEdges"/>
<polyline points="503,289.5 519.5,289.5 519.5,321.5 528,321.5" stroke="#1c2c1c" stroke-width="1" fill="none" shape-rendering="crispEdges"/>
<polyline points="503,329.5 530,329.5" stroke="#1c2c1c" stroke-width="1" fill="none" shape-rendering="crispEdges"/>
<polyline points="503,369.5 519.5,369.5 519.5,337.5 528,337.5" stroke="#1c2c1c" stroke-width="1" fill="none" shape-rendering="crispEdges"/>
<polyline points="503,409.5 519.5,409.5 519.5,449.5 536,449.5" stroke="#1c2c1c" stroke-width="1" fill="none" shape-rendering="crispEdges"/>
<polyline points="503,449.5 511.5,449.5 511.5,457.5 537,457.5" stroke="#1c2c1c" stroke-width="1" fill="none" shape-rendering="crispEdges"/>
<polyline points="503,489.5 511.5,489.5 511.5,473.5 537,473.5" stroke="#1c2c1c" stroke-width="1" fill="none" shape-rendering="crispEdges"/>
<polyline points="503,529.5 519.5,529.5 519.5,481.5 536,481.5" stroke="#1c2c1c" stroke-width="1" fill="none" shape-rendering="crispEdges"/>
<polyline points="503,577.5 519.5,577.5 519.5,609.5 528,609.5" stroke="#1c2c1c" stroke-width="1" fill="none" shape-rendering="crispEdges"/>
<polyline points="503,617.5 530,617.5" stroke="#1c2c1c" stroke-width="1" fill="none" shape-rendering="crispEdges"/>
<polyline points="503,657.5 519.5,657.5 519.5,625.5 528,625.5" stroke="#1c2c1c" stroke-width="1" fill="none" shape-rendering="crispEdges"/>
<polyline points="503,697.5 519.5,697.5 519.5,734" stroke="#1c2c1c" stroke-width="1" fill="none" shape-rendering="crispEdges"/>
<path d="M533.5,165.5 Q542.0,177.5 533.5,189.5 M533.5,165.5 H547.5 Q561.0,166.0 568.0,177.5 M533.5,189.5 H547.5 Q561.0,189.0 568.0,177.5" stroke="#101010" stroke-width="1" fill="none"/>
<circle cx="571.0" cy="177.5" r="2.2" stroke="#101010" fill="#fff"/>
<path d="M533.5,189.5 Q541.5,202.0 532.5,213.5" stroke="#101010" fill="none"/>
<text x="542.7" y="186.5" font-size="11" fill="#282828" text-anchor="start" >U9</text>
<path d="M525.5,317.5 Q534.0,329.5 525.5,341.5 M525.5,317.5 H539.5 Q553.0,318.0 560.0,329.5 M525.5,341.5 H539.5 Q553.0,341.0 560.0,329.5" stroke="#101010" stroke-width="1" fill="none"/>
<circle cx="563.0" cy="329.5" r="2.2" stroke="#101010" fill="#fff"/>
<text x="536.7" y="336.7" font-size="11" fill="#282828" text-anchor="start" >U17</text>
<path d="M533.5,453.5 Q542.0,465.5 533.5,477.5 M533.5,453.5 H547.5 Q561.0,454.0 568.0,465.5 M533.5,477.5 H547.5 Q561.0,477.0 568.0,465.5" stroke="#101010" stroke-width="1" fill="none"/>
<circle cx="571.0" cy="465.5" r="2.2" stroke="#101010" fill="#fff"/>
<path d="M533.5,453.5 Q541.5,441.0 532.5,428.5" stroke="#101010" fill="none"/>
<path d="M533.5,477.5 Q541.5,490.0 532.5,501.5" stroke="#101010" fill="none"/>
<text x="542.7" y="474.5" font-size="11" fill="#282828" text-anchor="start" >U18</text>
<path d="M525.5,605.5 Q534.0,617.5 525.5,629.5 M525.5,605.5 H539.5 Q553.0,606.0 560.0,617.5 M525.5,629.5 H539.5 Q553.0,629.0 560.0,617.5" stroke="#101010" stroke-width="1" fill="none"/>
<circle cx="563.0" cy="617.5" r="2.2" stroke="#101010" fill="#fff"/>
<text x="536.7" y="624.7" font-size="11" fill="#282828" text-anchor="start" >U26</text>
<path d="M532.5,716 Q539.5,725 538.5,736" stroke="#101010" fill="none"/>
<polyline points="573.5,177.5 794,177.5" stroke="#2f6f2f" stroke-width="1" fill="none" shape-rendering="crispEdges"/>
<polyline points="565.5,329.5 727.5,329.5 727.5,734" stroke="#2f6f2f" stroke-width="1" fill="none" shape-rendering="crispEdges"/>
<polyline points="565.5,617.5 719.5,617.5 719.5,734" stroke="#2f6f2f" stroke-width="1" fill="none" shape-rendering="crispEdges"/>
<polyline points="671.5,177.5 671.5,734" stroke="#2f6f2f" stroke-width="1" fill="none" shape-rendering="crispEdges"/>
<polyline points="703.5,177.5 703.5,734" stroke="#2f6f2f" stroke-width="1" fill="none" shape-rendering="crispEdges"/>
<polyline points="735.5,177.5 735.5,734" stroke="#2f6f2f" stroke-width="1" fill="none" shape-rendering="crispEdges"/>
<polyline points="743.5,177.5 743.5,734" stroke="#2f6f2f" stroke-width="1" fill="none" shape-rendering="crispEdges"/>
<rect x="574" y="463" width="220" height="1.5" fill="#d4f3ec" />
<rect x="574" y="466.5" width="220" height="1.5" fill="#d4f3ec" />
<polyline points="573.5,465.5 794,465.5" stroke="#18b094" stroke-width="2" fill="none" shape-rendering="crispEdges"/>
<polyline points="695.5,465.5 695.5,729.5 752,729.5" stroke="#18b094" stroke-width="2" fill="none" shape-rendering="crispEdges"/>
<rect x="693" y="467" width="1.5" height="262" fill="#c8f0e8"/><rect x="697" y="467" width="1.5" height="262" fill="#c8f0e8"/>
<polyline points="752,729.5 760.5,729.5" stroke="#101010" stroke-width="1" fill="none" shape-rendering="crispEdges"/>
<polyline points="743.5,401.5 752,401.5" stroke="#264a26" stroke-width="1" fill="none" shape-rendering="crispEdges"/>
<polyline points="752,401.5 760.5,401.5" stroke="#101010" stroke-width="1" fill="none" shape-rendering="crispEdges"/>
<polyline points="735.5,409.5 752,409.5" stroke="#264a26" stroke-width="1" fill="none" shape-rendering="crispEdges"/>
<polyline points="752,409.5 760.5,409.5" stroke="#101010" stroke-width="1" fill="none" shape-rendering="crispEdges"/>
<polyline points="671.5,417.5 752,417.5" stroke="#264a26" stroke-width="1" fill="none" shape-rendering="crispEdges"/>
<polyline points="752,417.5 760.5,417.5" stroke="#101010" stroke-width="1" fill="none" shape-rendering="crispEdges"/>
<polyline points="735.5,433.5 752,433.5" stroke="#264a26" stroke-width="1" fill="none" shape-rendering="crispEdges"/>
<polyline points="752,433.5 760.5,433.5" stroke="#101010" stroke-width="1" fill="none" shape-rendering="crispEdges"/>
<polyline points="703.5,441.5 752,441.5" stroke="#264a26" stroke-width="1" fill="none" shape-rendering="crispEdges"/>
<polyline points="752,441.5 760.5,441.5" stroke="#101010" stroke-width="1" fill="none" shape-rendering="crispEdges"/>
<polyline points="671.5,449.5 752,449.5" stroke="#264a26" stroke-width="1" fill="none" shape-rendering="crispEdges"/>
<polyline points="752,449.5 760.5,449.5" stroke="#101010" stroke-width="1" fill="none" shape-rendering="crispEdges"/>
<polyline points="743.5,641.5 752,641.5" stroke="#264a26" stroke-width="1" fill="none" shape-rendering="crispEdges"/>
<polyline points="752,641.5 760.5,641.5" stroke="#101010" stroke-width="1" fill="none" shape-rendering="crispEdges"/>
<polyline points="735.5,649.5 752,649.5" stroke="#264a26" stroke-width="1" fill="none" shape-rendering="crispEdges"/>
<polyline points="752,649.5 760.5,649.5" stroke="#101010" stroke-width="1" fill="none" shape-rendering="crispEdges"/>
<polyline points="727.5,665.5 752,665.5" stroke="#264a26" stroke-width="1" fill="none" shape-rendering="crispEdges"/>
<polyline points="752,665.5 760.5,665.5" stroke="#101010" stroke-width="1" fill="none" shape-rendering="crispEdges"/>
<polyline points="671.5,673.5 752,673.5" stroke="#264a26" stroke-width="1" fill="none" shape-rendering="crispEdges"/>
<polyline points="752,673.5 760.5,673.5" stroke="#101010" stroke-width="1" fill="none" shape-rendering="crispEdges"/>
<polyline points="735.5,681.5 752,681.5" stroke="#264a26" stroke-width="1" fill="none" shape-rendering="crispEdges"/>
<polyline points="752,681.5 760.5,681.5" stroke="#101010" stroke-width="1" fill="none" shape-rendering="crispEdges"/>
<polyline points="727.5,689.5 752,689.5" stroke="#264a26" stroke-width="1" fill="none" shape-rendering="crispEdges"/>
<polyline points="752,689.5 760.5,689.5" stroke="#101010" stroke-width="1" fill="none" shape-rendering="crispEdges"/>
<polyline points="703.5,705.5 752,705.5" stroke="#264a26" stroke-width="1" fill="none" shape-rendering="crispEdges"/>
<polyline points="752,705.5 760.5,705.5" stroke="#101010" stroke-width="1" fill="none" shape-rendering="crispEdges"/>
<polyline points="671.5,713.5 752,713.5" stroke="#264a26" stroke-width="1" fill="none" shape-rendering="crispEdges"/>
<polyline points="752,713.5 760.5,713.5" stroke="#101010" stroke-width="1" fill="none" shape-rendering="crispEdges"/>
<polyline points="727.5,721.5 752,721.5" stroke="#264a26" stroke-width="1" fill="none" shape-rendering="crispEdges"/>
<polyline points="752,721.5 760.5,721.5" stroke="#101010" stroke-width="1" fill="none" shape-rendering="crispEdges"/>
<line x1="760.5" y1="633" x2="760.5" y2="734" stroke="#101010" stroke-width="1" shape-rendering="crispEdges"/>
<path d="M760.5,397.5 H777.5 A13,12 0 0 1 777.5,421.5 H760.5" stroke="#101010" stroke-width="1" fill="none"/>
<line x1="760.5" y1="397.5" x2="760.5" y2="421.5" stroke="#101010" shape-rendering="crispEdges"/>
<text x="763.8" y="413.5" font-size="11" fill="#282828" text-anchor="start" >U71</text>
<polyline points="790.5,409.5 794,409.5" stroke="#101010" stroke-width="1" fill="none" shape-rendering="crispEdges"/>
<path d="M760.5,429.5 H777.5 A13,12 0 0 1 777.5,453.5 H760.5" stroke="#101010" stroke-width="1" fill="none"/>
<line x1="760.5" y1="429.5" x2="760.5" y2="453.5" stroke="#101010" shape-rendering="crispEdges"/>
<text x="763.8" y="445.5" font-size="11" fill="#282828" text-anchor="start" >U70</text>
<polyline points="790.5,441.5 794,441.5" stroke="#101010" stroke-width="1" fill="none" shape-rendering="crispEdges"/>
<path d="M760.5,645.5 H777.5 A13,12 0 0 1 777.5,669.5 H760.5" stroke="#101010" stroke-width="1" fill="none"/>
<line x1="760.5" y1="645.5" x2="760.5" y2="669.5" stroke="#101010" shape-rendering="crispEdges"/>
<text x="763.8" y="661.5" font-size="11" fill="#282828" text-anchor="start" >U80</text>
<polyline points="790.5,657.5 794,657.5" stroke="#101010" stroke-width="1" fill="none" shape-rendering="crispEdges"/>
<path d="M760.5,685.5 H777.5 A13,12 0 0 1 777.5,709.5 H760.5" stroke="#101010" stroke-width="1" fill="none"/>
<line x1="760.5" y1="685.5" x2="760.5" y2="709.5" stroke="#101010" shape-rendering="crispEdges"/>
<text x="763.8" y="701.5" font-size="11" fill="#282828" text-anchor="start" >U79</text>
<polyline points="790.5,697.5 794,697.5" stroke="#101010" stroke-width="1" fill="none" shape-rendering="crispEdges"/>
<path d="M760.5,717.5 H777.5 A13,12 0 0 1 777.5,741.5 H760.5" stroke="#101010" stroke-width="1" fill="none"/>
<line x1="760.5" y1="717.5" x2="760.5" y2="741.5" stroke="#101010" shape-rendering="crispEdges"/>
<text x="763.8" y="733.5" font-size="11" fill="#282828" text-anchor="start" >U78</text>
<polyline points="790.5,729.5 794,729.5" stroke="#101010" stroke-width="1" fill="none" shape-rendering="crispEdges"/>
<circle cx="431.5" cy="185.5" r="2.6" fill="#000"/>
<circle cx="439.5" cy="193.5" r="2.6" fill="#000"/>
<circle cx="423.5" cy="225.5" r="2.6" fill="#000"/>
<circle cx="447.5" cy="233.5" r="2.6" fill="#000"/>
<circle cx="439.5" cy="297.5" r="2.6" fill="#000"/>
<circle cx="431.5" cy="305.5" r="2.6" fill="#000"/>
<circle cx="423.5" cy="313.5" r="2.6" fill="#000"/>
<circle cx="439.5" cy="321.5" r="2.6" fill="#000"/>
<circle cx="447.5" cy="329.5" r="2.6" fill="#000"/>
<circle cx="431.5" cy="353.5" r="2.6" fill="#000"/>
<circle cx="447.5" cy="361.5" r="2.6" fill="#000"/>
<circle cx="423.5" cy="409.5" r="2.6" fill="#000"/>
<circle cx="447.5" cy="417.5" r="2.6" fill="#000"/>
<circle cx="455.5" cy="425.5" r="2.6" fill="#000"/>
<circle cx="431.5" cy="433.5" r="2.6" fill="#000"/>
<circle cx="439.5" cy="441.5" r="2.6" fill="#000"/>
<circle cx="431.5" cy="473.5" r="2.6" fill="#000"/>
<circle cx="439.5" cy="481.5" r="2.6" fill="#000"/>
<circle cx="423.5" cy="513.5" r="2.6" fill="#000"/>
<circle cx="447.5" cy="521.5" r="2.6" fill="#000"/>
<circle cx="439.5" cy="585.5" r="2.6" fill="#000"/>
<circle cx="431.5" cy="593.5" r="2.6" fill="#000"/>
<circle cx="423.5" cy="601.5" r="2.6" fill="#000"/>
<circle cx="439.5" cy="609.5" r="2.6" fill="#000"/>
<circle cx="447.5" cy="617.5" r="2.6" fill="#000"/>
<circle cx="431.5" cy="641.5" r="2.6" fill="#000"/>
<circle cx="447.5" cy="649.5" r="2.6" fill="#000"/>
<circle cx="423.5" cy="697.5" r="2.6" fill="#000"/>
<circle cx="447.5" cy="705.5" r="2.6" fill="#000"/>
<circle cx="455.5" cy="713.5" r="2.6" fill="#000"/>
<circle cx="431.5" cy="721.5" r="2.6" fill="#000"/>
<circle cx="439.5" cy="729.5" r="2.6" fill="#000"/>
<circle cx="743.5" cy="401.5" r="2.6" fill="#000"/>
<circle cx="735.5" cy="409.5" r="2.6" fill="#000"/>
<circle cx="671.5" cy="417.5" r="2.6" fill="#000"/>
<circle cx="735.5" cy="433.5" r="2.6" fill="#000"/>
<circle cx="703.5" cy="441.5" r="2.6" fill="#000"/>
<circle cx="671.5" cy="449.5" r="2.6" fill="#000"/>
<circle cx="743.5" cy="641.5" r="2.6" fill="#000"/>
<circle cx="735.5" cy="649.5" r="2.6" fill="#000"/>
<circle cx="727.5" cy="665.5" r="2.6" fill="#000"/>
<circle cx="671.5" cy="673.5" r="2.6" fill="#000"/>
<circle cx="735.5" cy="681.5" r="2.6" fill="#000"/>
<circle cx="727.5" cy="689.5" r="2.6" fill="#000"/>
<circle cx="703.5" cy="705.5" r="2.6" fill="#000"/>
<circle cx="671.5" cy="713.5" r="2.6" fill="#000"/>
<circle cx="727.5" cy="721.5" r="2.6" fill="#000"/>
<circle cx="703.5" cy="177.5" r="2.6" fill="#000"/>
<circle cx="695.5" cy="465.5" r="2.6" fill="#000"/>
<circle cx="695.5" cy="729.5" r="2.6" fill="#000"/>
</g>
<rect x="719.5" y="473.5" width="17" height="16" fill="none" stroke="#000" stroke-dasharray="1,1" shape-rendering="crispEdges"/>
<path d="M708.5,466.5 v15 l3.5,-3.3 l3,7 l2.6,-1.2 l-3,-6.8 h5 z" fill="#fff" stroke="#000" stroke-width="1"/>
<rect x="708.5" y="490.5" width="125" height="16" fill="#ffffe1" stroke="#000" shape-rendering="crispEdges"/>
<text x="711" y="502.5" font-size="11" fill="#000" textLength="117" lengthAdjust="spacingAndGlyphs" text-anchor="start" >State=0 : Node Names=</text>
<path d="M14.5,58.5 h7 l3.5,3.5 v10.5 h-10.5 z" fill="#fff" stroke="#b8b8b0"/><path d="M21.5,58.5 v3.5 h3.5" fill="none" stroke="#b8b8b0"/>
<path d="M33.5,72.5 v-10 h4 l1.5,1.5 h6.5 v8.5 z" fill="#d4d0c4" stroke="#a8a498"/><path d="M33.5,72.5 l3,-6 h12 l-3,6 z" fill="#dedad0" stroke="#a8a498"/><path d="M42,60.5 q3,-2.5 5.5,0 l1,-1.5 v3.5 h-3.5 l1.5,-1" fill="none" stroke="#b0aca0"/>
<rect x="57.5" y="59.5" width="13" height="13" fill="#34449a" stroke="#232f7a"/><rect x="60" y="60" width="8" height="5.5" fill="#98a8e0"/><rect x="60.5" y="67.5" width="7" height="5" fill="#dde2f0"/><rect x="62" y="68.5" width="2" height="3" fill="#34449a"/>
<path d="M81.5,59.5 h8 l3.5,3.5 v9.5 h-11.5 z" fill="#f4f2ea" stroke="#b8b4a8"/><path d="M84,66.5 h6 m-6,0 l2.5,-2.5 m-2.5,2.5 l2.5,2.5" stroke="#a8a8b8" fill="none"/>
<path d="M103.5,58.5 h7 l3,3 v10 h-10 z" fill="#fff" stroke="#9a9a94"/><circle cx="111.5" cy="66.5" r="3.8" fill="#dce8f4" stroke="#6a7078" stroke-width="1.2"/><path d="M114.3,69.5 l3.2,3.5" stroke="#5a5044" stroke-width="2"/>
<path d="M129.5,64 l3,-5.5 h7 l-2,5.5 z" fill="#fff" stroke="#9aa09a"/><path d="M126.5,64.5 h15 v6 h-15 z" fill="#4a9a86" stroke="#2c6a5c"/><path d="M128.5,70.5 h11 v2 h-11 z" fill="#dde8e4" stroke="#6a8a80"/><rect x="138" y="66" width="2" height="1" fill="#e8f0a0"/>
<path d="M157.5,65 l4,-4 v2.500 q7.500,-1 8,5 q-0.500,4 -5.500,3.500 q3.500,-1 2.500,-4 q-1,-2.500 -5,-2 v2.500 z" fill="#e2dfd4" stroke="#c2beb2"/>
<path d="M193.5,65 l-4,-4 v2.500 q-7.500,-1 -8,5 q0.500,4 5.500,3.500 q-3.500,-1 -2.500,-4 q1,-2.500 5,-2 v2.500 z" fill="#e2dfd4" stroke="#c2beb2"/>
<path d="M207.5,58 l4.5,9.5 M213.5,58 l-4.5,9.5" stroke="#9c988c" stroke-width="1.2" fill="none"/><circle cx="207.8" cy="70" r="2.2" fill="none" stroke="#9c988c" stroke-width="1.2"/><circle cx="213.2" cy="70" r="2.2" fill="none" stroke="#9c988c" stroke-width="1.2"/>
<path d="M225.5,60.5 h6 l2,2 v6 h-8 z" fill="#e6e2d8" stroke="#b4b0a4"/><path d="M231.5,64.5 h6 l2,2 v6 h-8 z" fill="#f0ede4" stroke="#b4b0a4"/>
<rect x="248.5" y="60.5" width="11" height="12" fill="#ccc8bc" stroke="#aaa69a"/><rect x="251.5" y="59" width="5" height="3" fill="#b8b4a8"/><path d="M255.5,65.5 h5 l2.5,2.5 v5 h-7.5 z" fill="#f0ede4" stroke="#aaa69a"/>
<path d="M273.5,59.5 l13,12.5 M286.5,59.5 l-13,12.5" stroke="#a4a094" stroke-width="1.6" fill="none"/>
<rect x="294.5" y="58.5" width="12" height="9" fill="none" stroke="#203080" stroke-dasharray="2,1"/><path d="M297,61.5 h7 M297,64.5 h5" stroke="#506090"/><path d="M304.5,64.5 v7 l1.7,-1.5 l1.3,2.5 l1.3,-0.6 l-1.3,-2.4 h2.2 z" fill="#fff" stroke="#404040" stroke-width="0.8"/>
<path d="M333.5,58.5 v9 M328.5,67.5 h10 M330.5,70 h6 M332.5,72.5 h2" stroke="#000" fill="none" shape-rendering="crispEdges"/>
<path d="M347.5,65.5 h3.5 l1.5,-3 l3,6 l3,-6 l1.5,3 h4" stroke="#000" fill="none"/>
<path d="M370,65.5 h7 M380,65.5 h7 M377.5,59 v13 M380.5,59 v13" stroke="#000" fill="none" shape-rendering="crispEdges"/>
<path d="M393.5,65.5 h2.5 q1,-4 2.5,0 q-1,3.5 -1.5,0 q1.5,-5 4,0 q-1,3.5 -1.5,0 q1.5,-5 4,0 q-1,3.5 -1.5,0 q1,-3 2.5,0 h2.5" stroke="#000" fill="none" stroke-width="0.9"/>
<path d="M418,65.5 h16" stroke="#000"/><path d="M422.5,61.5 v8 l6,-4 z" fill="#000"/><path d="M428.5,61 v9" stroke="#000" stroke-width="1.4"/>
<path d="M441.5,65.5 h6 M447.5,60 v11" stroke="#000" fill="none" shape-rendering="crispEdges"/><path d="M447.5,63.5 l5,-4 v-2 M447.5,67.5 l5,4 v2" stroke="#000" fill="none"/><path d="M452.5,71.5 l-3.2,-0.6 l1.6,-2 z" fill="#000"/>
<path d="M462.5,65.5 h6 M468.5,59 v13 M471.5,58.5 v4 M471.5,63.5 v4 M471.5,68.5 v4 M471.5,60.5 h7 v-3 M471.5,70.5 h7 v3 M471.5,65.5 h7 v5" stroke="#000" fill="none" shape-rendering="crispEdges"/><path d="M472,65.5 l3,-2 v4 z" fill="#000"/>
<path d="M489.5,58.5 v14 l12,-7 z" fill="none" stroke="#000"/><path d="M486.5,62.5 h3 M486.5,68.5 h3 M501.5,65.5 h2.5 M491,62.5 h2.5 M492.2,61.3 v2.5 M491,68.5 h2.5" stroke="#000" fill="none" stroke-width="0.9"/>
<rect x="509.5" y="60.5" width="14" height="10" rx="2.5" fill="none" stroke="#000" stroke-width="1.2"/><path d="M512,68 h2 v-5 h3.5 v5 h3 v-2.5" stroke="#000" fill="none"/>
<path d="M532,65.5 h7 M542,65.5 h6.5 M539.5,62 v7 M542.5,59.5 v12" stroke="#000" fill="none" shape-rendering="crispEdges"/>
<circle cx="563.5" cy="65.5" r="4.2" fill="none" stroke="#000" stroke-width="1.2"/><path d="M563.5,58 v3 M563.5,70 v3 M563.5,68 v-4" stroke="#000"/><path d="M561.5,65 l2,-2.5 l2,2.5 z" fill="#000"/>
<circle cx="587.5" cy="65.5" r="4.2" fill="none" stroke="#000" stroke-width="1.2"/><path d="M587.5,58 v3 M587.5,70 v3 M590.5,59.5 h2 M591.5,58.5 v2 M590.5,72 h2" stroke="#000" stroke-width="0.9"/>
<rect x="608.5" y="58.5" width="8" height="6" fill="#eef2fc" stroke="#3858b8"/><rect x="608.5" y="58.5" width="8" height="2.5" fill="#3858b8"/>
<rect x="611.5" y="62.5" width="8" height="6" fill="#eef2fc" stroke="#3858b8"/><rect x="611.5" y="62.5" width="8" height="2.5" fill="#3858b8"/>
<rect x="615.5" y="66.5" width="9" height="6" fill="#eef2fc" stroke="#3858b8"/><rect x="615.5" y="66.5" width="9" height="2.5" fill="#3858b8"/>
<rect x="633.5" y="59.5" width="6" height="13" fill="#eef2fc" stroke="#3858b8"/><rect x="633.5" y="59.5" width="6" height="2.5" fill="#3858b8"/>
<rect x="640.5" y="59.5" width="6" height="13" fill="#eef2fc" stroke="#3858b8"/><rect x="640.5" y="59.5" width="6" height="2.5" fill="#3858b8"/>
<rect x="657.5" y="59.5" width="13" height="5.5" fill="#eef2fc" stroke="#3858b8"/><rect x="657.5" y="59.5" width="13" height="2.5" fill="#3858b8"/>
<rect x="657.5" y="66.5" width="13" height="5.5" fill="#eef2fc" stroke="#3858b8"/><rect x="657.5" y="66.5" width="13" height="3" fill="#3858b8"/>
<rect x="679.5" y="59.5" width="13" height="12" fill="#eef2fc" stroke="#3858b8"/><rect x="679.5" y="59.5" width="13" height="2.5" fill="#3858b8"/>
<path d="M686.5,60 v6 h6" fill="none" stroke="#3858b8"/>
<rect x="702.5" y="59.5" width="14" height="12" fill="#eef2fc" stroke="#3858b8"/><rect x="702.5" y="59.5" width="14" height="3" fill="#3858b8"/>
<rect x="731.5" y="58.5" width="11" height="14" rx="1" fill="#8890c0" stroke="#505890"/><rect x="733" y="60" width="8" height="3" fill="#dfe6f4"/>
<rect x="733" y="64.5" width="2" height="1.5" fill="#e4e8f8" />
<rect x="736" y="64.5" width="2" height="1.5" fill="#e4e8f8" />
<rect x="739" y="64.5" width="2" height="1.5" fill="#e4e8f8" />
<rect x="733" y="67" width="2" height="1.5" fill="#e4e8f8" />
<rect x="736" y="67" width="2" height="1.5" fill="#e4e8f8" />
<rect x="739" y="67" width="2" height="1.5" fill="#e4e8f8" />
<rect x="733" y="69.5" width="2" height="1.5" fill="#e4e8f8" />
<rect x="736" y="69.5" width="2" height="1.5" fill="#e4e8f8" />
<rect x="739" y="69.5" width="2" height="1.5" fill="#e4e8f8" />
<rect x="763.5" y="59.5" width="10" height="13" fill="#fbfaf4" stroke="#b8b4a8"/><path d="M761.5,61 h3 M761.5,64 h3 M761.5,67 h3 M761.5,70 h3" stroke="#c8c4b8"/>
<rect x="784.5" y="58.5" width="11" height="13" fill="#eef2fa" stroke="#6a76a8"/><circle cx="789.5" cy="62.5" r="2" fill="#6a7ab0"/><path d="M786,70 q3.5,-6 7,0 z" fill="#6a7ab0"/><circle cx="795" cy="69" r="4" fill="#f0c020" stroke="#c89810"/><circle cx="795" cy="69" r="1.3" fill="#fff6c0"/>
<circle cx="813.5" cy="65.5" r="7" fill="#3a9a90" stroke="#206a70"/><path d="M809,62 q3,-3 6,-1 q-1,3 -3,3 q-2,2 -3,-2 M812,68 q3,-1 4,2 q-2,2 -4,-2" fill="#7fd0a0"/><path d="M817,68 l2,1.5 l2,-1.5 l0.5,2.5 l2,1 l-2,1.5 l-0.5,2 l-2,-1 l-2,1 l-0.5,-2.5 l-1.5,-1 l1.5,-1.5 z" fill="#f0c020" stroke="#c89810" stroke-width="0.6"/>
<path d="M10,88.5 h4 M10,90.5 h4 M10,92.5 h4" stroke="#304080"/><path d="M14.5,88.5 h4 v-2 l4.5,4 l-4.5,4 v-2 h-4 z" fill="#4a80e0" stroke="#2a50a8" stroke-width="0.8"/><circle cx="16" cy="99" r="3.6" fill="#f8f8f0" stroke="#303030" stroke-width="1.2"/><path d="M15,97.2 v3.6 l2.6,-1.8 z" fill="#202020"/><rect x="20.500" y="95.500" width="6" height="8" rx="2" fill="#f0d020" stroke="#a08000"/><rect x="23" y="97" width="1.500" height="4" fill="#504000"/>
<rect x="33.500" y="88.500" width="15" height="14" fill="#e4e0d4" stroke="#c4c0b4"/><rect x="37.500" y="91.500" width="8" height="8" fill="#f4f2ec" stroke="#b8b4a8"/><rect x="33.500" y="88.500" width="15" height="2" fill="#d0ccc0"/>
<rect x="61.500" y="87.500" width="14" height="14" fill="#f6f6f0" stroke="#404858"/><path d="M63.500,90.500 h2 M63.500,94 h2 M63.500,97.500 h2" stroke="#203070" stroke-width="1.500"/><path d="M67.500,90.500 h6" stroke="#808890"/><circle cx="72.500" cy="98.500" r="4.300" fill="#f2b818" stroke="#c08c08"/><circle cx="72.500" cy="98.500" r="1.400" fill="#fff4b0"/>
<path d="M85,94.500 q-2,-5 4,-5.500 q4,0 4.500,3 l1.500,-1.500 v4 h-4 l1.500,-1.500 q-1,-2 -3.500,-2 q-3,0.500 -2,3.500 z" fill="#4a7ad8" stroke="#2a4aa0" stroke-width="0.700"/><path d="M89.500,95.500 h9 M89.500,97.500 h9 M89.500,99.500 h9 M89.500,101.500 h9 M89.500,93.500 h4" stroke="#000" shape-rendering="crispEdges"/>
<path d="M108.500,89 l11,12.500" stroke="#6a6258" stroke-width="2"/><path d="M120.500,89 l-11,12.500" stroke="#8a8478" stroke-width="2"/><path d="M107,88 l3,-1 l2,2.500 l-2.500,2 z" fill="#c8c4b8" stroke="#585048" stroke-width="0.800"/><path d="M118,87 q4,0 4.500,3.500 l-2,1 q-1,-2 -3.500,-2 z" fill="#c8c4b8" stroke="#585048" stroke-width="0.800"/>
<rect x="128.500" y="84.500" width="23" height="22" fill="#f8f7f2" stroke="#8a94b0"/><path d="M133.500,88 v14 M131.500,100.500 h17 M131.500,91.500 h17" stroke="#283878" stroke-width="1.200" fill="none"/><path d="M134,99.500 l4,-7 l4,6 l3.500,-6 l3,1" stroke="#2848b0" stroke-width="1.500" fill="none"/>
<path d="M162.500,88 v15 M159.500,100.500 h15 M159.500,90.500 h15" stroke="#283878" stroke-width="1.200" fill="none"/><path d="M163,99 l3.500,-7 l3.500,5" stroke="#2848b0" stroke-width="1.300" fill="none"/><path d="M165.500,101.500 l8,-9 l2,2 l-8,9 z" fill="#e8b040" stroke="#805010" stroke-width="0.800"/>
<rect x="424.500" y="153.500" width="13" height="12" fill="#fbf5e0" stroke="#9a8444"/><path d="M424.500,157.500 h13 M424.500,161.500 h13" stroke="#9a8444"/>
<path d="M446.500,152.500 h9 l3,3 v11 h-12 z" fill="#f4f8ff" stroke="#5068a8"/><path d="M449,156 h1.500 M452,158 h1.500 M449,160 h1.500 M451,162.500 h4 M453,160.500 v4.500" stroke="#3858c0"/><path d="M455.500,163 l6,-8 l2,1.500 l-6,8 l-2.500,1 z" fill="#d8a848" stroke="#604818" stroke-width="0.800"/>
<rect x="468" y="151" width="1" height="20" fill="#aca899" />
<rect x="469" y="151" width="1" height="20" fill="#fff" />
<path d="M481,152.500 l8,14 h-16 z" fill="#f4f000" stroke="#202020" stroke-width="1.200" stroke-linejoin="round"/>
<path d="M497.500,153.500 h8 l3.500,3.500 v10.500 h-11.500 z" fill="#fbfbf6" stroke="#8a8880"/><path d="M509.500,157.500 v10.500 h-10.500" fill="none" stroke="#504e48"/>
<rect x="516" y="151" width="1" height="20" fill="#aca899" />
<rect x="517" y="151" width="1" height="20" fill="#fff" />
<circle cx="526.500" cy="161.500" r="4.300" fill="#e4eef8" stroke="#788088" stroke-width="1.200"/><path d="M529.500,165 l3.500,4" stroke="#685848" stroke-width="2"/><rect x="527.500" y="152.500" width="13" height="7" fill="#fff" stroke="#404040" stroke-width="0.800"/>
<text x="528.5" y="158.5" font-size="6" fill="#000" font-weight="bold" textLength="11" lengthAdjust="spacingAndGlyphs" text-anchor="start" >100</text>
</svg>
</body></html>
